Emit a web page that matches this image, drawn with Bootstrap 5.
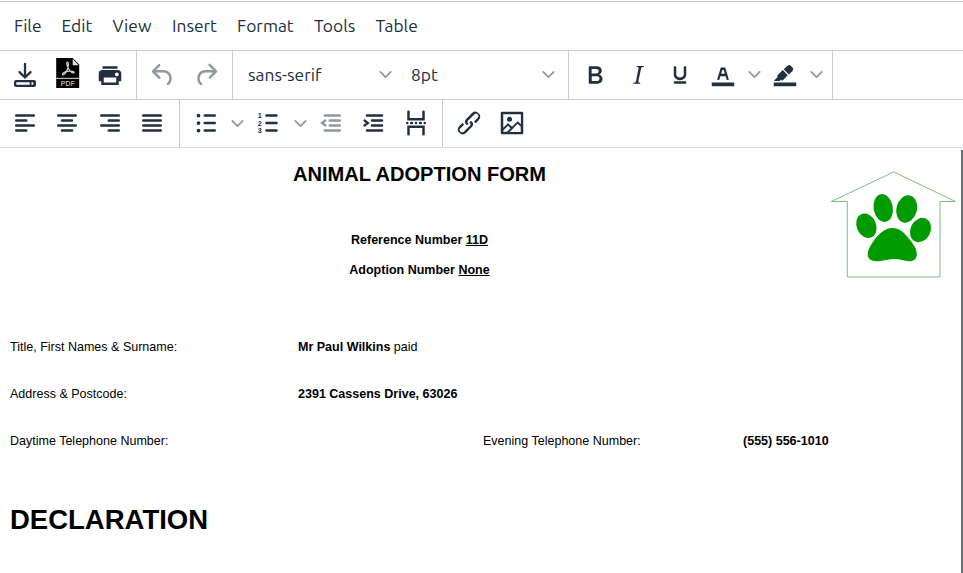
<!DOCTYPE html>
<html lang="en">
<head>
<meta charset="utf-8">
<meta name="viewport" content="width=device-width, initial-scale=1">
<title>Animal Adoption Form</title>
<link href="https://cdn.jsdelivr.net/npm/bootstrap@5.3.0/dist/css/bootstrap.min.css" rel="stylesheet">
<style>
:root { --ink: #222f3e; --line: #cccccc; }
body { height: 573px; background: #fff; font-family: "Liberation Sans", Arial, sans-serif; }
.menu-strip { height: 50px; margin-top: 1px; border-top: 1px solid var(--line); border-bottom: 1px solid var(--line); padding-left: 14px; padding-bottom: 1px; }
.menu-strip, .pick { font-family: Ubuntu, "Noto Sans", sans-serif; font-size: 17.4px; line-height: 24px; color: var(--ink); }
.menu-strip .btn { font: inherit; color: inherit; border: 0; padding: 0; margin-right: 20px; text-align: left; white-space: nowrap; }
.m-file { width: 27.5px; } .m-edit { width: 31px; } .m-view { width: 39.5px; } .m-insert { width: 45px; }
.m-format { width: 57px; } .m-tools { width: 41.5px; } .m-table { width: 44px; }
.tools-row { height: 49px; border-bottom: 1px solid var(--line); }
.tools-row.last { height: 48px; border-bottom-color: #d9d9d9; }
.tool-group { border-right: 1px solid var(--line); padding-left: 5px; padding-bottom: 1px; height: 100%; }
.tool-group.open-end { border-right: 0; }
.tool { width: 42.5px; height: 42px; padding: 0; border: 0; color: var(--ink); }
.tool svg { width: 30px; height: 30px; fill: currentColor; }
.faded { color: #9097a0; }
.split { width: 20px; height: 42px; padding: 0; border: 0; color: #9097a0; }
.chev { width: 13px; height: 13px; fill: none; stroke: #9097a0; stroke-width: 1.7; stroke-linecap: round; stroke-linejoin: round; }
.strokes { fill: none !important; stroke: currentColor; stroke-width: 2; stroke-linecap: round; }
.g-file { width: 137px; padding-left: 4px; } .g-undo { width: 96px; } .g-font { width: 336px; padding-left: 15px; } .g-style { width: 264px; }
.g-align { width: 180px; padding-left: 4px; } .g-list { width: 263px; }
.g-file .tool, .g-align .tool { width: 42.3px; }
.pick-font { width: 143.5px; margin-right: 19.5px; } .pick-size { width: 143.5px; }
.doc { height: 425px; border-right: 2px solid #6b6c70; margin-top: 2px; color: #000; font-size: 12.53px; line-height: 18px; padding-left: 10px; }
.doc-head { width: 820px; padding-top: 12px; padding-right: 1px; }
.doc h1 { font-size: 20.08px; line-height: 24px; font-weight: 700; margin: 0 0 45px; }
.doc h2 { font-size: 27.5px; line-height: 32px; font-weight: 700; margin: 0; padding-top: 1px; }
.doc-head p { margin-bottom: 12px; }
.logo { width: 127px; height: 109px; margin-top: 20px; }
.form-line { height: 47px; }
.c1 { width: 288px; } .c3 { width: 473px; } .c4 { width: 260px; }
.form-rows { margin-top: 47px; }
</style>
<script src="https://cdn.jsdelivr.net/npm/bootstrap@5.3.0/dist/js/bootstrap.bundle.min.js"></script>
</head>
<body class="overflow-hidden">
<svg class="d-none"><symbol id="chevron" viewBox="0 0 13 13"><path d="M1.300 3.900L6.500 9.200L11.700 3.900"/></symbol></svg>
<nav class="menu-strip d-flex align-items-center">
  <button class="btn m-file">File</button><button class="btn m-edit">Edit</button><button class="btn m-view">View</button><button class="btn m-insert">Insert</button><button class="btn m-format">Format</button><button class="btn m-tools">Tools</button><button class="btn m-table">Table</button>
</nav>

<div class="tools-row d-flex" role="toolbar">
  <div class="tool-group g-file d-flex align-items-center">
    <button class="btn tool d-flex align-items-center justify-content-center" aria-label="Save"><svg viewBox="0 .7 30 30"><path d="M15 4.500V18M9.500 12.800L15 18.200L20.500 12.800" fill="none" stroke="currentColor" stroke-width="2.300" stroke-linecap="round"/><path fill-rule="evenodd" d="M6 20.700h18a2 2 0 0 1 2 2v3a2 2 0 0 1-2 2H6a2 2 0 0 1-2-2v-3a2 2 0 0 1 2-2ZM6.300 23v2.400h13.400v-2.400ZM21.500 23v2.400h1.800v-2.400Z"/></svg></button>
    <button class="btn tool d-flex align-items-center justify-content-center" aria-label="PDF"><svg class="overflow-visible" viewBox="-.7 2 30 30"><path d="M3.500 0H20l6.500 6.500V30h-23Z" fill="#000"/><path d="M20 1l6 6.300h-6Z" fill="#e2e2e2"/><path d="M3.500 20.300h23" stroke="#ddd" stroke-width="1"/><path d="M14.800 4.200c-1.400 0-.8 3 1 6 1.400 2.600 3.600 4.800 5.200 4.600 1.800-.6-1.500-2.200-4.700-1.600-3 .4-6.500 1.700-6.500 3.300.8 1.400 3.800-2 5-5.300 1-2.800 1.300-6.700 0-7Z" fill="none" stroke="#d5d5d5" stroke-width="1.200"/><text x="15.100" y="28" text-anchor="middle" font-family="Liberation Sans, sans-serif" font-size="6.800" textLength="14" fill="#eee">PDF</text></svg></button>
    <button class="btn tool d-flex align-items-center justify-content-center" aria-label="Print"><svg viewBox="0 0 24 24"><path d="M18 8H6a3 3 0 0 0-3 3v6h2v3h14v-3h2v-6a3 3 0 0 0-3-3Zm-1 10H7v-4h10v4Zm.5-5c-.8 0-1.500-.7-1.500-1.500s.7-1.500 1.500-1.500 1.500.7 1.500 1.500-.7 1.500-1.500 1.500Zm.5-8H6v2h12V5Z"/></svg></button>
  </div>
  <div class="tool-group g-undo d-flex align-items-center">
    <button class="btn tool faded d-flex align-items-center justify-content-center" aria-label="Undo"><svg viewBox="0 0 24 24"><path d="M6.400 8H12c3.700 0 6.200 2 6.800 5.100.6 2.700-.4 5.600-2.300 6.800a1 1 0 0 1-1-1.800c1.100-.6 1.800-2.700 1.400-4.600-.5-2.100-2.100-3.500-4.900-3.500H6.400l3.300 3.300a1 1 0 1 1-1.400 1.400l-5-5a1 1 0 0 1 0-1.400l5-5a1 1 0 0 1 1.400 1.400L6.400 8Z"/></svg></button>
    <button class="btn tool faded d-flex align-items-center justify-content-center" aria-label="Redo"><svg viewBox="0 0 24 24"><path d="M17.600 10H12c-2.800 0-4.400 1.400-4.900 3.500-.4 2 .3 4 1.400 4.600a1 1 0 1 1-1 1.800c-2-1.200-2.900-4.100-2.300-6.800.6-3 3-5.100 6.800-5.100h5.600l-3.300-3.300a1 1 0 1 1 1.400-1.400l5 5a1 1 0 0 1 0 1.400l-5 5a1 1 0 0 1-1.400-1.400l3.300-3.300Z"/></svg></button>
  </div>
  <div class="tool-group g-font d-flex align-items-center">
    <div class="pick pick-font d-flex align-items-center justify-content-between"><span>sans-serif</span><svg class="chev"><use href="#chevron"/></svg></div>
    <div class="pick pick-size d-flex align-items-center justify-content-between"><span>8pt</span><svg class="chev"><use href="#chevron"/></svg></div>
  </div>
  <div class="tool-group g-style d-flex align-items-center">
    <button class="btn tool d-flex align-items-center justify-content-center" aria-label="Bold"><svg viewBox="0 0 24 24"><path d="M7.800 19c-.3 0-.5 0-.6-.2l-.2-.5V5.700c0-.2 0-.4.2-.5l.6-.2h5c1.500 0 2.700.3 3.500 1 .7.6 1.100 1.400 1.100 2.500a3 3 0 0 1-.6 1.900c-.4.6-1 1-1.600 1.200.4.1.9.3 1.300.6s.8.7 1 1.200c.4.4.5 1 .5 1.600 0 1.300-.4 2.300-1.300 3-.8.7-2.100 1-3.800 1H7.800Zm5-8.300c.6 0 1.200-.1 1.600-.5.4-.3.6-.7.6-1.300 0-1.100-.8-1.700-2.300-1.700H9.300v3.500h3.400Zm.5 6c.7 0 1.300-.1 1.700-.4.4-.4.6-.9.6-1.500s-.2-1-.7-1.400c-.4-.3-1-.4-2-.4H9.400v3.800h4Z"/></svg></button>
    <button class="btn tool d-flex align-items-center justify-content-center" aria-label="Italic"><svg viewBox="0 0 24 24"><path d="m16.700 4.700-.1.9h-.3c-.6 0-1 0-1.400.3-.3.3-.4.6-.5 1.100l-2.100 9.800v.6c0 .5.4.8 1.400.8h.2l-.2.8H8l.2-.8h.2c1.100 0 1.800-.5 2-1.500l2-9.800.1-.5c0-.6-.4-.8-1.400-.8h-.3l.2-.9h5.800Z"/></svg></button>
    <button class="btn tool d-flex align-items-center justify-content-center" aria-label="Underline"><svg viewBox="0 0 24 24"><path d="M16 5c.6 0 1 .4 1 1v5.500a4 4 0 0 1-.4 1.800l-1 1.400a5.300 5.300 0 0 1-5.500 1 5 5 0 0 1-1.600-1c-.5-.4-.8-.9-1.100-1.400a4 4 0 0 1-.4-1.800V6c0-.6.4-1 1-1s1 .4 1 1v5.500c0 .3 0 .6.2 1l.6.7a3.300 3.300 0 0 0 2.200.8 3.400 3.400 0 0 0 2.200-.8c.3-.2.4-.5.6-.8l.2-.9V6c0-.6.4-1 1-1ZM8 17h8c.6 0 1 .4 1 1s-.4 1-1 1H8a1 1 0 0 1 0-2Z"/></svg></button>
    <button class="btn tool d-flex align-items-center justify-content-center" aria-label="Text color"><svg viewBox="0 0 24 24"><path d="M3 18h18v3H3z"/><path d="M8.700 16h-.8a.5.5 0 0 1-.5-.6l2.700-9c.1-.3.3-.4.5-.4h2.800c.2 0 .4.1.5.4l2.700 9a.5.5 0 0 1-.5.6h-.8a.5.5 0 0 1-.4-.4l-.7-2.200c0-.3-.3-.4-.5-.4h-3.400c-.2 0-.4.1-.5.4l-.7 2.200c0 .3-.2.4-.4.4Zm2.600-7.600-.6 2a.5.5 0 0 0 .5.600h1.600a.5.5 0 0 0 .5-.6l-.6-2c0-.3-.3-.4-.5-.4h-.4c-.2 0-.4.1-.5.4Z"/></svg></button>
    <button class="btn split d-flex align-items-center justify-content-center" aria-label="Text color menu"><svg class="chev"><use href="#chevron"/></svg></button>
    <button class="btn tool d-flex align-items-center justify-content-center" aria-label="Highlight"><svg viewBox="0 0 24 24"><path d="M3 18h18v3H3z"/><path d="M7.700 16.700H3l3.300-3.300-.7-.8L10.200 8l4 4.100-4 4.200c-.2.2-.6.2-.8 0l-.6-.7-1.100 1.100zm5-7.500L11 7.400l3-2.900a2 2 0 0 1 2.600 0L18 6c.7.7.7 2 0 2.700l-2.900 2.900-1.800-1.800-.5-.6"/></svg></button>
    <button class="btn split d-flex align-items-center justify-content-center" aria-label="Highlight menu"><svg class="chev"><use href="#chevron"/></svg></button>
  </div>
</div>

<div class="tools-row last d-flex" role="toolbar">
  <div class="tool-group g-align d-flex align-items-center">
    <button class="btn tool d-flex align-items-center justify-content-center" aria-label="Align left"><svg class="strokes" viewBox="0 0 24 24"><path d="M5 6h14M5 10h8M5 14h14M5 18h8"/></svg></button>
    <button class="btn tool d-flex align-items-center justify-content-center" aria-label="Align center"><svg class="strokes" viewBox="0 0 24 24"><path d="M5 6h14M8 10h8M5 14h14M8 18h8"/></svg></button>
    <button class="btn tool d-flex align-items-center justify-content-center" aria-label="Align right"><svg class="strokes" viewBox="0 0 24 24"><path d="M5 6h14M11 10h8M5 14h14M11 18h8"/></svg></button>
    <button class="btn tool d-flex align-items-center justify-content-center" aria-label="Justify"><svg class="strokes" viewBox="0 0 24 24"><path d="M5 6h14M5 10h14M5 14h14M5 18h14"/></svg></button>
  </div>
  <div class="tool-group g-list d-flex align-items-center">
    <button class="btn tool d-flex align-items-center justify-content-center" aria-label="Bullet list"><svg class="strokes" viewBox="0 0 24 24"><path d="M11 6h8M11 12h8M11 18h8"/><path d="M6 6h0M6 12h0M6 18h0" stroke-width="3"/></svg></button>
    <button class="btn split d-flex align-items-center justify-content-center" aria-label="Bullet list menu"><svg class="chev"><use href="#chevron"/></svg></button>
    <button class="btn tool d-flex align-items-center justify-content-center" aria-label="Numbered list"><svg viewBox="0 0 24 24"><path class="strokes" d="M10 6H18M10 12h8M10 18h8"/><g font-family="Liberation Sans, sans-serif" font-size="5.800" font-weight="700"><text x="2.900" y="8">1</text><text x="2.900" y="14">2</text><text x="2.900" y="20">3</text></g></svg></button>
    <button class="btn split d-flex align-items-center justify-content-center" aria-label="Numbered list menu"><svg class="chev"><use href="#chevron"/></svg></button>
    <button class="btn tool faded d-flex align-items-center justify-content-center" aria-label="Outdent"><svg class="strokes" viewBox="0 0 24 24"><path d="M7 6h12M11 10h8M11 14h8M7 18h12"/><path d="M7.500 10L4.800 12l2.700 2" stroke-width="1.800"/></svg></button>
    <button class="btn tool d-flex align-items-center justify-content-center" aria-label="Indent"><svg class="strokes" viewBox=".6 0 24 24"><path d="M7 6h12M11 10h8M11 14h8M7 18h12"/><path d="M5 10l2.700 2L5 14" stroke-width="1.800"/></svg></button>
    <button class="btn tool d-flex align-items-center justify-content-center" aria-label="Page break"><svg viewBox="0 0 24 24"><path class="strokes" d="M5 12h0M8.200 12h.6M12 12h0M15.200 12h.6M19 12h0"/><path d="M7 3v5h10V3c0-.6.4-1 1-1s1 .4 1 1v7H5V3c0-.6.4-1 1-1s1 .4 1 1ZM6 22a1 1 0 0 1-1-1v-7h14v7c0 .6-.4 1-1 1a1 1 0 0 1-1-1v-5H7v5c0 .6-.4 1-1 1Z"/></svg></button>
  </div>
  <div class="tool-group open-end d-flex align-items-center">
    <button class="btn tool d-flex align-items-center justify-content-center" aria-label="Link"><svg viewBox="0 0 24 24"><path d="M6.200 12.300a1 1 0 0 1 1.400 1.400l-2 2a2 2 0 1 0 2.600 2.800l4.800-4.800a1 1 0 0 0 0-1.400 1 1 0 1 1 1.400-1.300 2.900 2.900 0 0 1 0 4L9.600 20a3.900 3.900 0 0 1-5.500-5.500l2-2Zm11.600-.6a1 1 0 0 1-1.400-1.400l2-2a2 2 0 1 0-2.600-2.800L11 10.300a1 1 0 0 0 0 1.400A1 1 0 1 1 9.600 13a2.900 2.900 0 0 1 0-4L14.400 4a3.900 3.900 0 0 1 5.500 5.500l-2 2Z"/></svg></button>
    <button class="btn tool d-flex align-items-center justify-content-center" aria-label="Image"><svg viewBox="0 0 24 24"><path fill-rule="evenodd" d="m5 15.700 3.300-3.200c.3-.3.7-.3 1 0L12 15l4.100-4c.3-.4.8-.4 1 0l2 1.900V5H5v10.700ZM5 18V19h3l2.800-2.900-2-2L5 17.900Zm14-3-2.500-2.400-6.400 6.500H19v-4ZM4 3h16c.6 0 1 .4 1 1v16c0 .6-.4 1-1 1H4a1 1 0 0 1-1-1V4c0-.6.4-1 1-1Z"/><circle cx="10" cy="9" r="2"/></svg></button>
  </div>
</div>

<main class="doc">
  <div class="d-flex">
    <div class="doc-head text-center">
      <h1>ANIMAL ADOPTION FORM</h1>
      <p class="fw-bold">Reference Number <u>11D</u></p>
      <p class="fw-bold">Adoption Number <u>None</u></p>
    </div>
    <svg class="logo flex-shrink-0" viewBox="830 170 127 109" aria-label="Paw in a house">
      <path d="M893.700 171.900L955.500 201.500H940V277H847.300V201.500H831.300Z" fill="none" stroke="#7fbf86" stroke-width="1"/>
      <g fill="#009b00">
        <ellipse cx="883.200" cy="208" rx="9.600" ry="14" transform="rotate(-10 883.200 208)"/>
        <ellipse cx="906.700" cy="209" rx="10.200" ry="13.800" transform="rotate(14 906.700 209)"/>
        <ellipse cx="866.400" cy="225.800" rx="9.700" ry="12.600" transform="rotate(-24 866.400 225.800)"/>
        <ellipse cx="920.500" cy="230" rx="10" ry="12.600" transform="rotate(26 920.500 230)"/>
        <path d="M892.500 228C884 228 877 236 872.500 242.500C868.500 248.500 867 253 868 256.500C869.500 260.500 873.500 261.300 878 261.200C884 261 888.500 259 894.500 259C900 259 904 261.200 909.500 261.200C914 261.200 917 258.500 916.800 254C916.500 248.500 914 245 910 240C905 233.500 900 228 892.500 228Z"/>
      </g>
    </svg>
  </div>
  <div class="form-rows">
    <div class="form-line d-flex"><div class="c1">Title, First Names &amp; Surname:</div><div><b>Mr Paul Wilkins</b> paid</div></div>
    <div class="form-line d-flex"><div class="c1">Address &amp; Postcode:</div><b>2391 Cassens Drive, 63026</b></div>
    <div class="form-line d-flex"><div class="c3">Daytime Telephone Number:</div><div class="c4">Evening Telephone Number:</div><b>(555) 556-1010</b></div>
  </div>
  <h2 class="mt-4">DECLARATION</h2>
</main>
</body>
</html>
